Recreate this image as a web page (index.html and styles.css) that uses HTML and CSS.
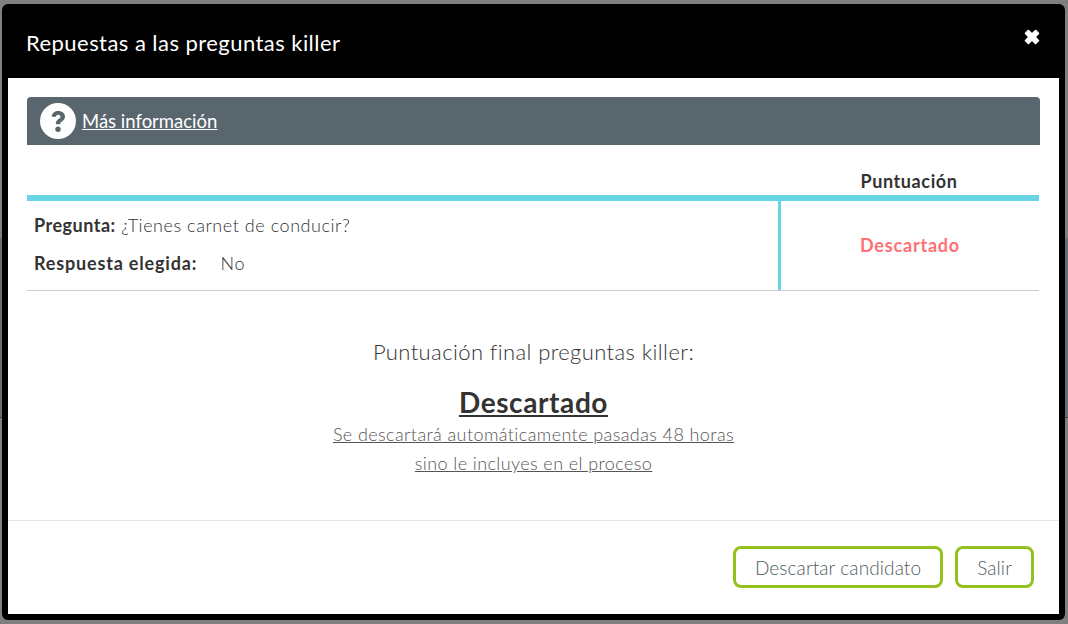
FILE: index.html
```html
<!DOCTYPE html>
<html lang="es">
<head>
    <meta charset="UTF-8">
    <title>Repuestas a las preguntas killer</title>
    <link rel="stylesheet" href="styles.css">
</head>
<body>
    <div class="backdrop-bar"></div>
    <div class="modal">
        <div class="modal-header">
            <h2>Repuestas a las preguntas killer</h2>
            <svg class="close" width="16" height="16" viewBox="0 0 16 16"><path d="M1.6 4.4 4.4 1.6 8 5.2l3.6-3.6 2.8 2.8L10.8 8l3.6 3.6-2.8 2.8L8 10.8l-3.6 3.6-2.8-2.8L5.2 8z" fill="#fff" stroke="#fff" stroke-width="1.800" stroke-linejoin="round"/></svg>
        </div>
        <div class="modal-body">
            <div class="info-bar">
                <svg class="info-icon" width="36" height="36" viewBox="0 0 36 36">
                    <circle cx="18" cy="18" r="18" fill="#fff"/>
                    <path d="M11.6 13.6c.5-3.6 3.2-5.6 6.8-5.6 3.700 0 6.600 2.300 6.600 5.600 0 2.500-1.400 3.700-3 4.800-1.300.9-1.900 1.400-1.900 2.800h-4.300c0-2.700 1-3.900 2.700-5.100 1.200-.8 2-1.400 2-2.400 0-1.100-1-1.900-2.200-1.900-1.400 0-2.300.8-2.600 2.300z" fill="#59666e"/>
                    <circle cx="18" cy="26.200" r="2.700" fill="#59666e"/>
                </svg>
                <a href="#">Más información</a>
            </div>
            <div class="score-head">Puntuación</div>
            <div class="answer">
                <div class="answer-text">
                    <p><b>Pregunta:</b> ¿Tienes carnet de conducir?</p>
                    <p><b class="label">Respuesta elegida:</b> No</p>
                </div>
                <div class="answer-score">Descartado</div>
            </div>
            <div class="final">
                <p class="final-title">Puntuación final preguntas killer:</p>
                <p class="final-value">Descartado</p>
                <p class="final-note">Se descartará automáticamente pasadas 48 horas</p>
                <p class="final-note">sino le incluyes en el proceso</p>
            </div>
        </div>
        <div class="modal-footer">
            <button>Descartar candidato</button>
            <button>Salir</button>
        </div>
    </div>
</body>
</html>
```

FILE: styles.css
```css
body {
    margin: 0;
    height: 624px;
    overflow: hidden;
    background-color: #7f7f7f;
    font-family: "Lato", "Open Sans", sans-serif;
    color: #333;
}

/* barra de la pagina de detras, solo asoma por los bordes */
.backdrop-bar {
    position: absolute;
    left: 0;
    right: 0;
    top: 238px;
    height: 179px;
    background-color: #646f73;
    border-bottom: 1px solid #3f4447;
}

.modal {
    position: relative;
    margin: 4px 3px 0 2px;
    height: 616px;
    box-sizing: border-box;
    background-color: #000;
    border-radius: 6px;
    padding: 0 6px 6px;
    display: flex;
    flex-direction: column;
}

.modal-header {
    height: 74px;
    flex: none;
    display: flex;
    justify-content: space-between;
    padding: 0 19px 0 18px;
}

.modal-header h2 {
    margin: 0;
    padding-top: 26px;
    font-size: 22px;
    line-height: 26px;
    font-weight: 400;
    letter-spacing: 0.45px;
    color: #fff;
}

.close {
    margin-top: 25px;
}

.modal-body {
    background-color: #fff;
    padding: 19px 19px 0 19px;
    height: 443px;
    box-sizing: border-box;
    border-bottom: 1px solid #e5e5e5;
    flex: none;
}

.info-bar {
    height: 48px;
    background-color: #59666e;
    border-radius: 4px 4px 0 0;
    display: flex;
    align-items: center;
    padding-left: 13px;
    gap: 6px;
}

.info-bar a {
    color: #fff;
    font-size: 18.5px;
}

.score-head {
    width: 260px;
    margin-left: auto;
    margin-right: 1px;
    padding-top: 26px;
    height: 24px;
    line-height: 20px;
    text-align: center;
    font-size: 18px;
    font-weight: 700;
    letter-spacing: 0.6px;
}

.answer {
    display: flex;
    height: 96px;
    box-sizing: border-box;
    margin-right: 1px;
    border-top: 6px solid #67d5e3;
    border-bottom: 1px solid #ccc;
}

.answer-text {
    flex: 1;
    padding: 14px 0 0 7px;
    font-size: 18px;
    font-weight: 300;
    letter-spacing: 0.55px;
}

.answer-text p {
    margin: 0 0 18px;
    line-height: 20px;
}

.answer-text b {
    font-weight: 700;
    letter-spacing: 0.5px;
}

.answer-text .label {
    margin-right: 18px;
    letter-spacing: 0.82px;
}

.answer-score {
    width: 258px;
    border-left: 3px solid #67d5e3;
    padding-bottom: 2px;
    display: flex;
    align-items: center;
    justify-content: center;
    color: #ff6f75;
    font-size: 18px;
    font-weight: 700;
    letter-spacing: 0.8px;
}

.final {
    padding-top: 47px;
    text-align: center;
}

.final p {
    margin: 0;
}

.final-title {
    font-size: 22px;
    line-height: 28px;
    font-weight: 300;
    letter-spacing: 0.4px;
}

.final-value {
    padding-top: 20px;
    padding-bottom: 2px;
    font-size: 28px;
    line-height: 32px;
    font-weight: 700;
    letter-spacing: 0.6px;
    text-decoration: underline;
}

.final-note {
    font-size: 18px;
    line-height: 29px;
    font-weight: 300;
    letter-spacing: 0.4px;
    color: #555;
    text-decoration: underline;
}

.modal-footer {
    flex: 1;
    background-color: #fff;
    display: flex;
    justify-content: flex-end;
    gap: 12px;
    padding: 25px 25px 0 0;
}

.modal-footer button {
    height: 42px;
    padding: 0 19px;
    background-color: #fff;
    border: 3px solid #95c11f;
    border-radius: 8px;
    font-family: inherit;
    font-size: 19px;
    font-weight: 300;
    letter-spacing: 0.1px;
    color: #4f5c64;
}
```
